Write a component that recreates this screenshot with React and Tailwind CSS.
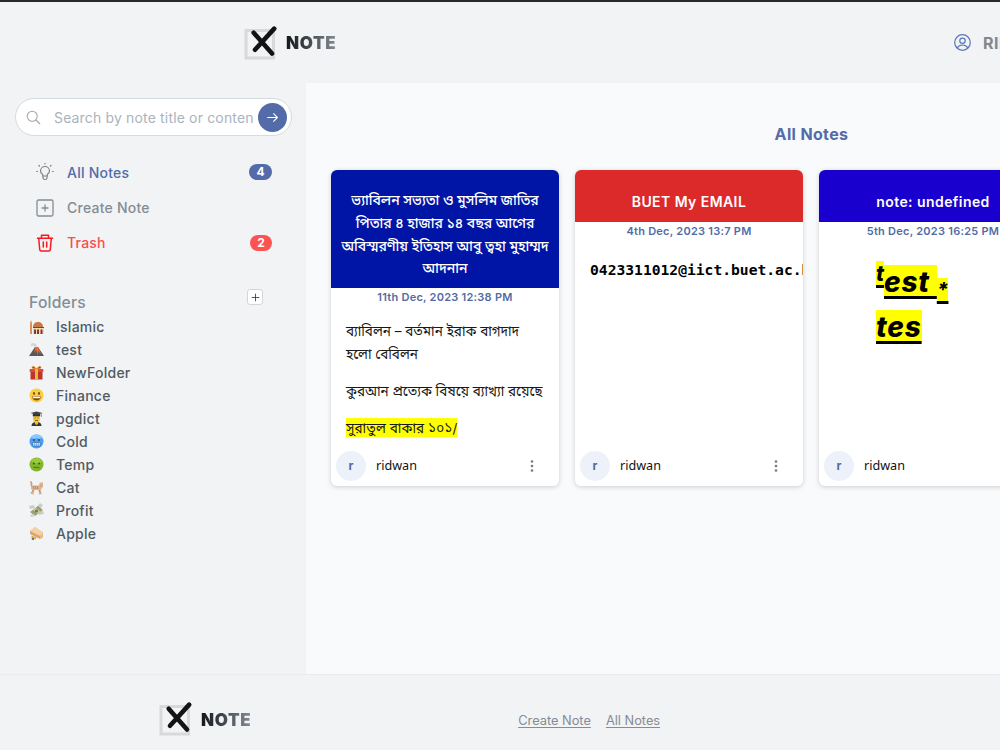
import React from "react";

const Svg = ({ children, className = "", box = "0 0 24 24", w = 1.5 }) => (
  <svg viewBox={box} className={className} fill="none" stroke="currentColor" strokeWidth={w} strokeLinecap="round" strokeLinejoin="round">
    {children}
  </svg>
);

const Logo = () => (
  <div className="flex items-center">
    <svg viewBox="0 0 34 36" className="h-9 w-[34px] shrink-0">
      <rect x="2" y="5.5" width="27.5" height="27.5" fill="#f3f3f4" stroke="#d8d9da" strokeWidth="3" />
      <path d="M9.700 7.800L28 28.600M30.200 3.600L11 24.800" stroke="#111414" strokeWidth="4.600" strokeLinecap="round" />
    </svg>
    <span className="ml-[8px] bg-gradient-to-r from-[#14181c] to-[#858c94] bg-clip-text pt-px text-[17px] font-black leading-6 tracking-[0.6px] text-transparent">NOTE</span>
  </div>
);

const emojis = {
  mosque: (
    <>
      <path d="M1 15V4l1-3 1 3v11z" fill="#dd9060" />
      <path d="M4 8c0-3 2-5 5-5s5 2 5 5z" fill="#cf7648" />
      <path d="M4 8h11v7H4z" fill="#f3d9ae" />
      <path d="M5 15v-4l1-1 1 1v4zM8 15v-4l1-1 1 1v4zM11.500 15v-4l1-1 1 1v4zM4 8h11v1H4z" fill="#7b3f2d" />
    </>
  ),
  volcano: (
    <>
      <path d="M2 4Q1 1 4 1q4 0 4 4H6Q5 3 2 4z" fill="#d5d6da" />
      <path d="M6 5h3l6 9H0z" fill="#5a5759" />
      <path d="M6 5h3l1 2 2 5-3-3v5l-2-6-2 3 1-4z" fill="#f2652b" />
    </>
  ),
  gift: (
    <>
      <path d="M1.500 6h12v8.500h-12z" fill="#bd3527" />
      <path d="M.7 4h13.600v3H.7z" fill="#de4c37" />
      <path d="M6 4h3v10.500H6z" fill="#edb83c" />
      <path d="M7.500 4Q4-.5 3 2.500 3 4 7.500 4zM7.500 4Q11-.5 12 2.500 12 4 7.500 4z" fill="#b9321f" stroke="#eaa731" strokeWidth=".8" />
    </>
  ),
  smile: (
    <>
      <circle cx="7.500" cy="7.500" r="7" fill="#fcce3d" />
      <ellipse cx="5" cy="5.500" rx=".9" ry="1.400" fill="#684416" />
      <ellipse cx="10" cy="5.500" rx=".9" ry="1.400" fill="#684416" />
      <path d="M3 8.500h9q-.6 4-4.500 4T3 8.500z" fill="#7a481b" />
      <path d="M3.600 8.700h7.800l-.5 1.500H4.100z" fill="#fff" />
    </>
  ),
  student: (
    <>
      <path d="M2.500 15q0-4 5-4t5 4z" fill="#343638" />
      <path d="M6 10h3v3l-1.500 1L6 13z" fill="#efb733" />
      <ellipse cx="7.500" cy="7.500" rx="3.600" ry="4" fill="#f9c83d" />
      <path d="M3.800 2.500h7.400v2.800H3.800z" fill="#303235" />
      <path d="M1.500 2l6-1.500 6 1.500-6 1.800z" fill="#3f4347" />
      <path d="M12.500 2v4" stroke="#bb8b32" strokeWidth=".8" />
      <path d="M5.500 7h1.200M8.300 7h1.200M6 9.500h3" stroke="#6d4a1b" strokeWidth=".8" />
    </>
  ),
  cold: (
    <>
      <circle cx="7.500" cy="7.500" r="7" fill="#4b9df2" />
      <path d="M1 5q1-4.500 6.500-4.500T14 5l-2-1-2 1-2-1-3 1-2-1z" fill="#87c9fa" />
      <circle cx="5" cy="6" r="1" fill="#244b83" />
      <circle cx="10" cy="6" r="1" fill="#244b83" />
      <rect x="3.500" y="8.500" width="8" height="3.500" rx="1" fill="#e8f5ff" stroke="#2c65a8" strokeWidth=".7" />
      <path d="M5.500 9v3M7.500 9v3M9.500 9v3M4 10.300h7" stroke="#5688bb" strokeWidth=".5" />
    </>
  ),
  sick: (
    <>
      <circle cx="7.500" cy="7.500" r="7" fill="#82b72b" />
      <path d="M2 5q2-4 5.500-4T13 5q-5 2-11 0z" fill="#9acb3d" />
      <circle cx="4.800" cy="6.500" r=".9" fill="#39551b" />
      <circle cx="10.200" cy="6.500" r=".9" fill="#39551b" />
      <path d="M4.500 10.800q1.500-1 3-.5t3 .5" stroke="#4a6d22" fill="none" />
    </>
  ),
  cat: (
    <>
      <path d="M1.500 1.500q2 2 .5 4.500" stroke="#cd9b78" strokeWidth="1.500" fill="none" />
      <path d="M2 5.500h8l1-3.500 1 1 2-1v5l-2 2-.5 5.500H10L9.500 10H5.500l-1 4.500H3l.3-5L2 9z" fill="#dfb290" />
      <path d="M4 6l1 3M6 6l1 3M8 6l1 3M12 5v1M4 10l-2 4M10 10l2.500 4" stroke="#b08062" strokeWidth=".8" />
    </>
  ),
  money: (
    <>
      <path d="M7 5l4-5 3 2-4 6zM9 9l5-1 1 3-5 1zM0 3l5-1 1 3-5 1z" fill="#c9cfc9" />
      <path d="M1 9L9 3l5 4-8 6z" fill="#98a07a" />
      <path d="M4 7l5 4 3-2-5-4z" fill="#d9c48c" />
      <circle cx="7.500" cy="8" r="1.600" fill="#6c7859" />
      <path d="M1 12l4-1 1 2-4 1z" fill="#ccd0cc" />
    </>
  ),
  hut: (
    <>
      <path d="M1 5l5-4 8 6v4l-2 2-8-4z" fill="#e6bb8a" />
      <path d="M1 5l5-4 8 5-3 4z" fill="#f4d0a4" />
      <path d="M1 5l10 5v3L1 8z" fill="#dba473" />
      <path d="M2.500 9.500l5 2-1 2-2-1-2 1z" fill="#e9a832" />
      <path d="M3 12h2v2H3z" fill="#64788e" />
    </>
  ),
};

const folders = [
  ["mosque", "Islamic"], ["volcano", "test"], ["gift", "NewFolder"], ["smile", "Finance"], ["student", "pgdict"],
  ["cold", "Cold"], ["sick", "Temp"], ["cat", "Cat"], ["money", "Profit"], ["hut", "Apple"],
];

const Card = ({ color, title, date, head = "pb-2 pt-5 font-semibold leading-6 tracking-[0.43px] text-[14px]", children }) => (
  <article className="flex h-[316px] w-[228px] shrink-0 flex-col overflow-hidden rounded-md bg-white shadow-[0_1px_5px_rgba(0,0,0,0.18)]">
    <div className={`whitespace-nowrap text-center text-white ${head} ${color}`}>{title}</div>
    <div className="h-[18px] shrink-0 text-center text-[11px] font-semibold leading-[18px] tracking-[0.25px] text-[#536ba5]">{date}</div>
    <div className="min-h-0 flex-1 overflow-hidden">{children}</div>
    <div className="flex h-[40px] shrink-0 items-center pl-[5px] pr-[22px]">
      <span className="flex size-[30px] items-center justify-center rounded-full bg-[#edf1fa] text-[12px] font-bold text-[#536ba5]">r</span>
      <span className="ml-[10px] flex-1 pt-px font-['Noto_Sans'] text-[12.600px] text-[#111]">ridwan</span>
      <svg viewBox="0 0 10 14" className="h-[14px] w-[10px]" fill="#727b85">
        <circle cx="5" cy="2.500" r="1.300" /><circle cx="5" cy="7" r="1.300" /><circle cx="5" cy="11.500" r="1.300" />
      </svg>
    </div>
  </article>
);

const mark = "bg-[#ff0] underline decoration-[3px] underline-offset-[4px] [text-decoration-skip-ink:none]";

export default function App() {
  return (
    <div className="flex h-[750px] w-[1000px] flex-col overflow-hidden border-t-2 border-[#29292c] bg-[#f1f3f5] font-['Inter','Noto_Sans_Bengali',sans-serif] text-[#4b555e]">
      <header className="flex h-[81px] shrink-0 items-center justify-between pl-[244px]">
        <Logo />
        <div className="flex w-[46px] items-center overflow-hidden whitespace-nowrap text-[#5b76b9]">
          <Svg className="size-[17px] shrink-0" w={1.700}><circle cx="12" cy="12" r="11" /><circle cx="12" cy="9.500" r="3.800" /><path d="M4.500 19.500Q7 15.500 12 15.500t7.500 4" /></Svg>
          <span className="ml-3 text-[16px] font-bold tracking-[0.5px] text-[#85868a]">RIDWAN</span>
        </div>
      </header>
      <div className="flex h-[591px] shrink-0">
        <aside className="w-[306px] shrink-0 pl-[15px] pt-[15px]">
          <div className="flex h-[38px] w-[277px] items-center rounded-full border border-[#d6dae1] bg-white pl-[10px] pr-[4px]">
            <Svg className="size-[15px] shrink-0 text-[#a0a6ad]" w={1.700}><circle cx="10" cy="10" r="8" /><path d="M16 16l6 6" /></Svg>
            <span className="ml-[13px] w-[202px] overflow-hidden whitespace-nowrap text-[14px] tracking-[0.16px] text-[#aab3be]">Search by note title or conten</span>
            <span className="ml-[3px] flex size-[29px] shrink-0 items-center justify-center rounded-full bg-[#536ba9] text-white">
              <Svg className="size-[13px]" w={2}><path d="M3 12h18M14 5l7 7-7 7" /></Svg>
            </span>
          </div>
          <nav className="mt-[18px] flex w-[257px] flex-col text-[14px] font-medium tracking-[0.23px]">
            <div className="flex h-[36px] items-center pl-[21px] text-[#536ba9]">
              <Svg className="mr-[13px] size-[18px] text-[#7d8389]" box="0 0 18 18" w={1.200}><path d="M6.700 13v-1.500Q4.500 10 4.500 8a4.500 4.500 0 0 1 9 0q0 2-2.200 3.500V13zM7 13v2q0 1.500 2 1.500t2-1.500v-2M9 1V.5M3.500 3L3 2.500M14.500 3l.5-.5M1.500 8.500H.7M16.500 8.500h.8" /></Svg>
              <span className="flex-1">All Notes</span>
              <span className="flex h-4 w-[23px] items-center justify-center rounded-full bg-[#536ba9] text-[12px] font-bold tracking-normal text-white">4</span>
            </div>
            <div className="flex h-[35px] items-center pl-[21px] text-[#858d94]">
              <Svg className="mr-[13px] size-[18px]" box="0 0 18 18" w={1.300}><rect x="1" y="1" width="16" height="16" rx="1.500" /><path d="M9 6v6M6 9h6" /></Svg>
              <span>Create Note</span>
            </div>
            <div className="flex h-[35px] items-center pl-[21px] text-[#fc4d4d]">
              <Svg className="mr-[13px] size-[18px] text-[#fb1820]" box="0 0 18 18" w={1.500}><path d="M1.500 4.200h15M5.500 4V1.200h7V4M2.700 4l1 11.500q.1 1.500 1.600 1.500h7.400q1.500 0 1.600-1.500L15.300 4M7.300 8v5M10.700 8v5" /></Svg>
              <span className="flex-1">Trash</span>
              <span className="flex h-4 w-[22px] items-center justify-center rounded-full bg-[#fd5252] text-[12px] font-bold tracking-normal text-white">2</span>
            </div>
          </nav>
          <div className="mt-[29px] flex h-[26px] w-[248px] justify-between pl-[14px]">
            <span className="pt-[3px] text-[15.700px] font-medium leading-[22px] tracking-[0.2px] text-[#848d95]">Folders</span>
            <span className="flex size-[16px] items-center justify-center rounded-[3px] border border-[#d3d6d9] bg-white text-[#333]"><Svg className="size-[9px]" w={2.200}><path d="M12 3v18M3 12h18" /></Svg></span>
          </div>
          <ul className="pl-[14px]">
            {folders.map(([icon, name]) => (
              <li key={name} className="flex h-[23px] items-center text-[14px] font-medium tracking-[0.26px] text-[#515a63]">
                <svg viewBox="0 0 15 15" className="mr-3 size-[15px]">{emojis[icon]}</svg>{name}
              </li>
            ))}
          </ul>
        </aside>
        <main className="min-w-0 flex-1 overflow-hidden bg-[#f8fafc] pl-[25px] pt-[38px]">
          <h1 className="w-[961px] text-center text-[16px] font-bold leading-[26px] tracking-[0.35px] text-[#536ba9]">All Notes</h1>
          <div className="mt-[23px] flex gap-4">
            <Card color="bg-[#0014a5]" date="11th Dec, 2023 12:38 PM" head="pt-[19px] pb-[8px] text-[14px] font-medium leading-[22.750px] tracking-[-0.05px]" title={<>ভ্যাবিলন সভ্যতা ও মুসলিম জাতির<br />পিতার ৪ হাজার ১৪ বছর আগের<br />অবিস্মরণীয় ইতিহাস আবু ত্বহা মুহাম্মদ<br />আদনান</>}>
              <div className="whitespace-nowrap pl-[15px] pt-[14px] text-[13.500px] leading-[23px] text-[#181818]">
                <p>ব্যাবিলন – বর্তমান ইরাক বাগদাদ<br />হলো বেবিলন</p>
                <p className="mt-[14px]">কুরআন প্রত্যেক বিষয়ে ব্যাখ্যা রয়েছে</p>
                <p className="mt-[14px]"><span className="bg-[#ff0] pb-px pt-0.5 tracking-[0.1px]">সুরাতুল বাকার ১০১/</span></p>
              </div>
            </Card>
            <Card color="bg-[#dc2929]" date="4th Dec, 2023 13:7 PM" title="BUET My EMAIL">
              <div className="overflow-hidden whitespace-nowrap pl-[15px] pt-[19px] font-['DejaVu_Sans_Mono'] text-[14.650px] font-bold leading-[21px] text-black">0423311012@iict.buet.ac.bd</div>
            </Card>
            <Card color="bg-[#1a00ce]" date="5th Dec, 2023 16:25 PM" title="note: undefined">
              <div className="whitespace-nowrap pl-[57px] pt-[20px] text-[28px] font-extrabold italic leading-[45px] tracking-[0.8px] text-black">
                <p className="h-[45px]"><span className={`relative -top-[11px] text-[21px] leading-none tracking-normal ${mark}`}>t</span><span className={mark}>est </span><span className={`relative top-[5px] text-[20px] leading-none tracking-normal ${mark}`}>*</span></p>
                <p><span className={mark}>tes</span></p>
              </div>
            </Card>
          </div>
        </main>
      </div>
      <footer className="flex h-[76px] shrink-0 items-center border-t border-[#e9ebee] pl-[159px] pt-[13px]">
        <Logo />
        <nav className="ml-[267px] flex gap-[15px] pt-[3px] text-[12.800px] text-[#858c94]"><a className="underline underline-offset-2">Create Note</a><a className="underline underline-offset-2">All Notes</a></nav>
      </footer>
    </div>
  );
}
